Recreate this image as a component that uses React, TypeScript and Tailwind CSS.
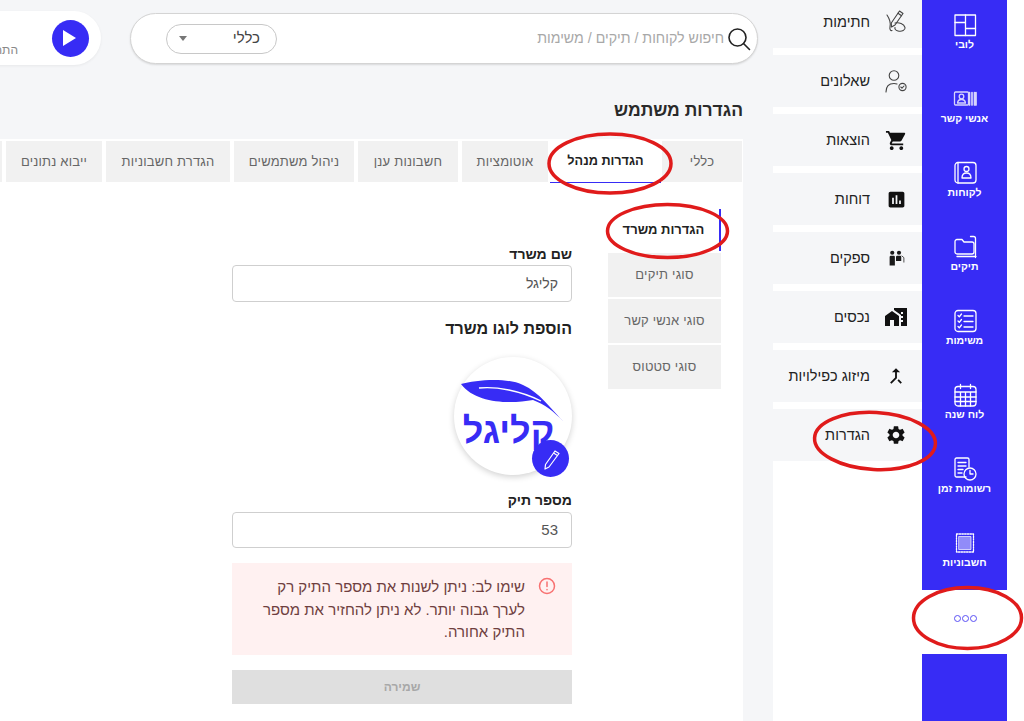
import React from "react";
import { MdShoppingCart, MdAssessment, MdSettings, MdHomeWork, MdCallMerge } from "react-icons/md";

const S = { fill: "none", stroke: "currentColor", strokeWidth: 1.3, strokeLinejoin: "round" as const, strokeLinecap: "round" as const };

const Lobby = () => (
  <svg width="24" height="24" viewBox="0 0 24 24" {...S}>
    <rect x="2" y="2" width="20.5" height="20.5" />
    <path d="M12.5 2v20.5M2 9.5h10.500M12.500 15.500h10" />
  </svg>
);
const Contacts = () => (
  <svg width="24" height="24" viewBox="0 0 24 24" className="opacity-80" {...S}>
    <rect x="1.500" y="5" width="14" height="13" rx="1" />
    <circle cx="8.500" cy="9.500" r="2.300" />
    <path d="M4.500 16c.3-2.800 2-3.500 4-3.500s3.700.7 4 3.500z" />
    <path d="M16.500 5.500v12.500M19 5.500v12.500M21.500 5.500v12.500M23 5.500v12.500" strokeWidth="1.700" />
  </svg>
);
const Clients = () => (
  <svg width="24" height="24" viewBox="0 0 24 24" {...S}>
    <rect x="2" y="1.500" width="21" height="20.500" rx="3" />
    <path d="M5 1.500v20.500" />
    <circle cx="13.500" cy="8" r="2.500" />
    <path d="M9 17c0-3.500 1.800-5 4.500-5s4.500 1.500 4.500 5z" />
  </svg>
);
const Folders = () => (
  <svg width="24" height="24" viewBox="0 0 24 24" {...S}>
    <path d="M2 6.500a2 2 0 0 1 2-2h5l2 2.500h8a2 2 0 0 1 2 2V17a2 2 0 0 1-2 2H4a2 2 0 0 1-2-2z" />
    <path d="M17.500 1.500h3a2 2 0 0 1 2 2v19M4 21.500h19" />
  </svg>
);
const Tasks = () => (
  <svg width="24" height="24" viewBox="0 0 24 24" {...S}>
    <rect x="2" y="1.500" width="21" height="21" rx="3" />
    <path d="M5 6.500l1.300 1.300L8.500 5M5 12l1.300 1.300L8.500 10.500M5 17.500l1.300 1.300L8.500 16" />
    <path d="M11 7h9M11 12.500h9M11 18h9" />
  </svg>
);
const Calendar = () => (
  <svg width="24" height="24" viewBox="0 0 24 24" {...S}>
    <rect x="2" y="3.500" width="21" height="19.500" rx="3" />
    <path d="M2 9h21M2 14h21M2 18.500h21M7.500 9v14M12.500 9v14M17.500 9v14M7.500 1.500v4M17.500 1.500v4" />
  </svg>
);
const TimeLog = () => (
  <svg width="24" height="24" viewBox="0 0 24 24" {...S}>
    <path d="M13 20H3.500A1.500 1.500 0 0 1 2 18.500V2.500A1.500 1.500 0 0 1 3.500 1h11A1.500 1.500 0 0 1 16 2.500V10" />
    <path d="M5 5.500h8M5 9h8M5 12.500h5M5 16h4" />
    <circle cx="17" cy="17" r="6" />
    <path d="M17 13.500V17h3" />
  </svg>
);
const Invoices = () => (
  <svg width="24" height="24" viewBox="0 0 24 24" {...S}>
    <rect x="3.500" y="3" width="17" height="18" strokeDasharray="1.500 1.200" />
    <rect x="6" y="5.500" width="12" height="13" fill="currentColor" fillOpacity="0.45" strokeWidth="0.700" />
  </svg>
);

const PenSign = () => (
  <svg width="24" height="24" viewBox="0 0 24 24" fill="none" stroke="#444" strokeWidth="1.100" strokeLinejoin="round" strokeLinecap="round">
    <path d="M15.500 1l3.500 2.500-8 11.500-3.500 2-.2-4z" />
    <path d="M14 3.200l3.500 2.500" />
    <path d="M3 5c2 3 4 8 3 12-.5 2 .5 4 2 3.500M11 13c4-1 9 1 10 4.500.6 2.500-3 4.500-7 3.500-2-.5-3.500-1.500-3-3.500" />
  </svg>
);
const UserCheck = () => (
  <svg width="24" height="24" viewBox="0 0 24 24" fill="none" stroke="#444" strokeWidth="1.100" strokeLinecap="round" strokeLinejoin="round">
    <circle cx="10" cy="6.500" r="4.800" />
    <path d="M2 23c0-5.500 3-8.500 8-8.500 1 0 2 .1 3 .5" />
    <circle cx="18.500" cy="18" r="3.600" />
    <path d="M16.800 18l1.200 1.200 2-2.200" />
  </svg>
);
const People = () => (
  <svg width="18" height="18" viewBox="0 0 24 24" fill="#1a1a1a">
    <circle cx="7" cy="5" r="2.800" />
    <circle cx="16" cy="5" r="2.800" />
    <path d="M3.500 10.500a1.500 1.500 0 0 1 1.500-1.500h4a1.500 1.500 0 0 1 1.500 1.500V22h-7z" />
    <path d="M12 10.500a1.500 1.500 0 0 1 1.500-1.500h4a1.500 1.500 0 0 1 1.500 1.500v5.500h-7z" />
    <path d="M19.500 9l3 2.500V18" fill="none" stroke="#1a1a1a" strokeWidth="1" />
  </svg>
);

const sideItems = [
  { label: "לובי", icon: <Lobby /> },
  { label: "אנשי קשר", icon: <Contacts /> },
  { label: "לקוחות", icon: <Clients /> },
  { label: "תיקים", icon: <Folders /> },
  { label: "משימות", icon: <Tasks /> },
  { label: "לוח שנה", icon: <Calendar /> },
  { label: "רשומות זמן", icon: <TimeLog /> },
  { label: "חשבוניות", icon: <Invoices /> },
];

const subItems = [
  { label: "חתימות", icon: <PenSign /> },
  { label: "שאלונים", icon: <UserCheck /> },
  { label: "הוצאות", icon: <MdShoppingCart size={23} color="#111" /> },
  { label: "דוחות", icon: <MdAssessment size={21} color="#111" /> },
  { label: "ספקים", icon: <People /> },
  { label: "נכסים", icon: <MdHomeWork size={24} color="#111" /> },
  { label: "מיזוג כפילויות", icon: <MdCallMerge size={22} color="#111" /> },
  { label: "הגדרות", icon: <MdSettings size={22} color="#111" /> },
];

const tabs = [
  { label: "כללי", w: "w-[80px]" },
  { label: "הגדרות מנהל", w: "w-[111px]", active: true },
  { label: "אוטומציות", w: "w-[86px]" },
  { label: "חשבונות ענן", w: "w-[100px]" },
  { label: "ניהול משתמשים", w: "w-[120px]" },
  { label: "הגדרת חשבוניות", w: "w-[124px]" },
  { label: "ייבוא נתונים", w: "w-[96px]" },
  { label: "מסמכים", w: "w-[90px]" },
];

export default function App() {
  return (
    <div dir="rtl" className="relative flex h-[721px] w-[1024px] overflow-hidden bg-white text-[#222] font-['Liberation_Sans','Noto_Sans',sans-serif]">
      <div className="h-full w-[17px] shrink-0 bg-white" />

      <aside className="flex h-full w-[85px] shrink-0 flex-col bg-[#372cf5] text-white">
        <div className="h-[590px] shrink-0">
          {sideItems.map((it) => (
            <div key={it.label} className="flex h-[74px] flex-col items-center pt-[13px]">
              {it.icon}
              <span className="text-[10.500px] font-bold leading-[14px]">{it.label}</span>
            </div>
          ))}
        </div>
        <div className="flex h-[64px] shrink-0 items-center justify-center gap-[1px] bg-white pb-[7px] pl-[2px]">
          <span className="h-[7px] w-[7px] rounded-full border-[1.5px] border-[#5a50f5]" />
          <span className="h-[7px] w-[7px] rounded-full border-[1.5px] border-[#5a50f5]" />
          <span className="h-[7px] w-[7px] rounded-full border-[1.5px] border-[#5a50f5]" />
        </div>
      </aside>

      <nav className="flex h-full w-[149px] shrink-0 flex-col gap-[7px] bg-white">
        {subItems.map((it, i) => (
          <div
            key={it.label}
            className={`flex h-[52px] shrink-0 items-center bg-[#f5f6f8] ${i === 0 ? "mt-[-4px]" : ""}`}
          >
            <span className="flex w-[52px] shrink-0 justify-center">{it.icon}</span>
            <span className="whitespace-nowrap text-[14.500px] leading-[20px] text-[#222]">{it.label}</span>
          </div>
        ))}
      </nav>

      <main className="flex h-full w-[773px] shrink-0 flex-col overflow-hidden bg-[#f5f6f8]">
        <header className="mt-[11px] flex h-[54px] shrink-0 items-center gap-[29px] pr-[15px]">
          <div className="mt-[1px] flex h-[51px] w-[628px] shrink-0 items-center rounded-full border border-[#d4d4d4] bg-white pr-[6px] pl-[35px] shadow-[0_1px_2px_rgba(0,0,0,0.12)]">
            <svg width="24" height="24" viewBox="0 0 24 24" fill="none" stroke="#222" strokeWidth="1.600" strokeLinecap="round" className="shrink-0">
              <circle cx="10.500" cy="10.500" r="8.500" />
              <path d="M16.500 16.500l6 6" />
            </svg>
            <span className="mr-[3px] whitespace-nowrap text-[14.200px] text-[#a8a8a8]">חיפוש לקוחות / תיקים / משימות</span>
            <div className="mr-auto flex h-[30px] w-[111px] items-center justify-between rounded-full border border-[#c8c8c8] bg-white pr-[16px] pl-[12px]">
              <span className="text-[15px] text-[#444]">כללי</span>
              <span className="h-0 w-0 border-x-[4.500px] border-t-[5px] border-x-transparent border-t-[#777]" />
            </div>
          </div>
          <div className="flex h-[54px] w-[140px] shrink-0 items-center rounded-full bg-white pr-[12px] shadow-[0_1px_3px_rgba(0,0,0,0.06)]">
            <span className="flex h-[37px] w-[37px] shrink-0 items-center justify-center rounded-full bg-[#372cf5]">
              <span className="ml-[-3px] h-0 w-0 border-y-[8px] border-l-[13px] border-y-transparent border-l-white" />
            </span>
            <span className="mt-[24px] mr-[34px] whitespace-nowrap text-[12px] text-[#888]">התחלת טיימר</span>
          </div>
        </header>

        <h1 className="mt-[31px] h-[28px] shrink-0 pr-[30px] text-[17.500px] font-bold leading-[28px] text-[#2a2a2a]">הגדרות משתמש</h1>

        <section className="mt-[15px] mr-[30px] flex min-h-0 flex-1 flex-col bg-white">
          <div className="flex h-[44px] shrink-0 gap-[4px] pt-[2px] pr-[1px]">
            {tabs.map((t) => (
              <div
                key={t.label}
                className={`flex shrink-0 items-center justify-center ${t.w} ${
                  t.active
                    ? "mr-[-3px] ml-[-2px] h-[42px] border-b border-[#372cf5] bg-white text-[12.700px] font-bold text-[#222]"
                    : "h-[41px] bg-[#f1f1f1] text-[13px] tracking-[0.2px] text-[#666]"
                }`}
              >
                {t.label}
              </div>
            ))}
          </div>

          <div className="flex gap-[36px] pt-[26px] pr-[22px]">
            <div className="flex w-[113px] shrink-0 flex-col gap-[2px]">
              <div className="flex h-[42px] items-center justify-center border-r-2 border-[#372cf5] text-[13px] font-bold text-[#222]">הגדרות משרד</div>
              <div className="flex h-[44px] items-center justify-center bg-[#f1f1f1] text-[13px] tracking-[0.2px] text-[#666]">סוגי תיקים</div>
              <div className="flex h-[44px] items-center justify-center bg-[#f1f1f1] text-[13px] tracking-[0.2px] text-[#666]">סוגי אנשי קשר</div>
              <div className="flex h-[44px] items-center justify-center bg-[#f1f1f1] text-[13px] tracking-[0.2px] text-[#666]">סוגי סטטוס</div>
            </div>

            <form className="flex w-[340px] shrink-0 flex-col pt-[36px]">
              <label className="h-[18px] text-[14px] font-bold leading-[18px] text-[#222]">שם משרד</label>
              <div className="mt-[2px] flex h-[37px] items-center rounded-[4px] border border-[#cfcfcf] bg-white px-[13px] text-[14px] text-[#555]">קליגל</div>
              <h2 className="mt-[17px] h-[20px] text-[16px] font-bold leading-[20px] text-[#222]">הוספת לוגו משרד</h2>

              <div className="relative mt-[18px] flex h-[118px] w-[118px] flex-col items-center rounded-full bg-white shadow-[0_2px_6px_rgba(0,0,0,0.18)]">
                <svg width="104" height="44" viewBox="0 0 104 44" className="mt-[22px] shrink-0">
                  <path d="M0 5C15 1 45 -2 62 6C78 13 90 30 103 43C92 32 85 26 72 21C50 25 15 25 0 5Z" fill="#372cf5" />
                  <path d="M18 9C35 7 60 12 80 22" fill="none" stroke="#fff" strokeWidth="1.300" />
                </svg>
                <span className="mt-[-12px] mr-[9px] text-[36px] font-bold leading-[40px] text-[#372cf5]">קליגל</span>
                <span className="absolute top-[83px] left-[78px] flex h-[37px] w-[37px] items-center justify-center rounded-full bg-[#372cf5]">
                  <svg width="22" height="22" viewBox="0 0 22 22" fill="none" stroke="#fff" strokeWidth="1.200" strokeLinejoin="round">
                    <path d="M15 3l4 2.500L9 19l-4 2 .5-4.500z" />
                    <path d="M13.500 5l4 2.500" />
                  </svg>
                </span>
              </div>

              <label className="mt-[16px] h-[18px] text-[14px] font-bold leading-[18px] text-[#222]">מספר תיק</label>
              <div className="mt-[3px] flex h-[36px] items-center rounded-[4px] border border-[#cfcfcf] bg-white px-[13px] text-[15px] text-[#555]">53</div>

              <div className="mt-[15px] flex h-[92px] gap-[13px] bg-[#fff1f1] pt-[13px] pr-[16px] pl-[25px]">
                <svg width="18" height="18" viewBox="0 0 18 18" fill="none" stroke="#f87171" strokeWidth="1.500" strokeLinecap="round" className="mt-[1px] shrink-0">
                  <circle cx="9" cy="9" r="7.500" />
                  <path d="M9 5v4.500M9 12.500v.3" />
                </svg>
                <p className="text-[15px] leading-[22.500px] text-[#6f3f3f]">שימו לב: ניתן לשנות את מספר התיק רק לערך גבוה יותר. לא ניתן להחזיר את מספר התיק אחורה.</p>
              </div>

              <div className="mt-[15px] flex h-[34px] items-center justify-center bg-[#dfdfdf] text-[12px] font-semibold text-[#a8a8a8]">שמירה</div>
            </form>
          </div>
        </section>
      </main>

      <svg width="1024" height="721" viewBox="0 0 1024 721" fill="none" stroke="#e01b1b" strokeWidth="3.500" className="pointer-events-none absolute top-0 left-0">
        <ellipse cx="610" cy="163.500" rx="61" ry="29.500" />
        <ellipse cx="667.500" cy="231" rx="60" ry="26.500" />
        <ellipse cx="875" cy="441" rx="60.500" ry="28.500" transform="rotate(3 875 441)" />
        <ellipse cx="967.500" cy="618" rx="54" ry="30.500" />
      </svg>
    </div>
  );
}
